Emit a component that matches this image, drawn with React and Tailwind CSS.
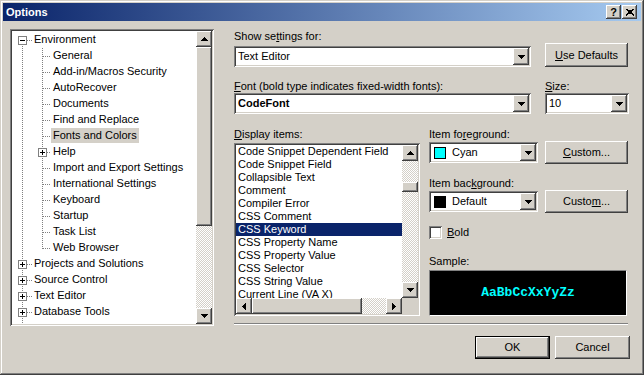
import React from 'react';

const font = "font-['Liberation_Sans',Arial,sans-serif]";
const frame = 'shadow-[inset_-1px_-1px_#404040,inset_1px_1px_#d4d0c8,inset_-2px_-2px_#808080,inset_2px_2px_#ffffff]';
const raised = 'shadow-[inset_-1px_-1px_#404040,inset_1px_1px_#ffffff,inset_-2px_-2px_#808080,inset_2px_2px_#d4d0c8]';
const sunken = 'shadow-[inset_1px_1px_#808080,inset_-1px_-1px_#ffffff,inset_2px_2px_#404040,inset_-2px_-2px_#d4d0c8]';
const checker = 'bg-[repeating-conic-gradient(#d4d0c8_0_25%,#ffffff_0_50%)] bg-[length:2px_2px]';
const dotH = 'bg-[repeating-linear-gradient(to_right,#808080_0_1px,transparent_1px_2px)]';
const dotV = 'bg-[repeating-linear-gradient(to_bottom,#808080_0_1px,transparent_1px_2px)]';

const Arrow = ({ dir }) => {
  const vertical = dir === 'up' || dir === 'down';
  const pts = {
    up: '0,4 3.5,0 7,4',
    down: '0,0 7,0 3.5,4',
    left: '4,0 4,7 0,3.5',
    right: '0,0 4,3.5 0,7',
  }[dir];
  return (
    <svg width={vertical ? 7 : 4} height={vertical ? 4 : 7} shapeRendering="crispEdges">
      <polygon points={pts} fill="#000" />
    </svg>
  );
};

const ScrollBtn = ({ dir }) => (
  <div className={`w-4 h-4 shrink-0 bg-[#d4d0c8] ${raised} flex items-center justify-center`}>
    <Arrow dir={dir} />
  </div>
);

const Combo = ({ w, children }) => (
  <div className={`${sunken} ${w} bg-white h-[21px] p-[2px] flex items-center`}>
    <div className="flex-1 min-w-0 flex items-center pl-[2px] leading-[17px]">{children}</div>
    <div className={`w-4 h-[17px] bg-[#d4d0c8] ${raised} flex items-center justify-center`}>
      <Arrow dir="down" />
    </div>
  </div>
);

const Btn = ({ w, h = 'h-[23px]', def, children }) => (
  <div
    className={`${w} ${h} bg-[#d4d0c8] flex items-center justify-center ${
      def ? 'border border-black' : ''
    } ${raised}`}
  >
    <span>{children}</span>
  </div>
);

const Expander = ({ open }) => (
  <div className="absolute top-[4px] w-[9px] h-[9px] border border-[#808080] bg-white flex items-center justify-center">
    <svg width="5" height="5" shapeRendering="crispEdges">
      <rect x="0" y="2" width="5" height="1" fill="#000" />
      {!open && <rect x="2" y="0" width="1" height="5" fill="#000" />}
    </svg>
  </div>
);

const tree = [
  { l: 0, t: 'Environment', exp: 'open', first: true },
  { l: 1, t: 'General' },
  { l: 1, t: 'Add-in/Macros Security' },
  { l: 1, t: 'AutoRecover' },
  { l: 1, t: 'Documents' },
  { l: 1, t: 'Find and Replace' },
  { l: 1, t: 'Fonts and Colors', sel: true },
  { l: 1, t: 'Help', exp: 'closed' },
  { l: 1, t: 'Import and Export Settings' },
  { l: 1, t: 'International Settings' },
  { l: 1, t: 'Keyboard' },
  { l: 1, t: 'Startup' },
  { l: 1, t: 'Task List' },
  { l: 1, t: 'Web Browser', last: true },
  { l: 0, t: 'Projects and Solutions', exp: 'closed' },
  { l: 0, t: 'Source Control', exp: 'closed' },
  { l: 0, t: 'Text Editor', exp: 'closed' },
  { l: 0, t: 'Database Tools', exp: 'closed' },
];

const TreeRow = ({ item }) => (
  <div className="relative h-4 flex items-start shrink-0">
    <span className={`absolute left-[10px] w-px bottom-0 ${item.first ? 'top-[8px]' : 'top-0'} ${dotV}`} />
    {item.l === 0 ? (
      <>
        <span className={`absolute left-[15px] top-[8px] w-[5px] h-px ${dotH}`} />
        <div className="absolute left-[6px] top-0">
          <Expander open={item.exp === 'open'} />
        </div>
      </>
    ) : (
      <>
        <span className={`absolute left-[30px] top-0 w-px ${item.last ? 'h-[9px]' : 'bottom-0'} ${dotV}`} />
        <span className={`absolute left-[31px] top-[8px] w-[8px] h-px ${dotH}`} />
        {item.exp && (
          <div className="absolute left-[26px] top-0">
            <Expander open={false} />
          </div>
        )}
      </>
    )}
    <span
      className={`${item.l === 0 ? 'ml-[20px]' : 'ml-[39px]'} px-[2px] h-[15px] leading-[15px] whitespace-nowrap ${
        item.sel ? 'bg-[#d4d0c8]' : ''
      }`}
    >
      {item.t}
    </span>
  </div>
);

const Tree = () => (
  <div className={`w-[204px] h-[297px] shrink-0 bg-white p-[2px] flex ${sunken}`}>
    <div className="flex-1 overflow-hidden pt-px flex flex-col">
      {tree.map((item) => (
        <TreeRow key={item.t} item={item} />
      ))}
      <div className="relative flex-1">
        <span className={`absolute left-[10px] w-px top-0 bottom-0 ${dotV}`} />
      </div>
    </div>
    <div className="w-4 flex flex-col">
      <ScrollBtn dir="up" />
      <div className={`h-[179px] bg-[#d4d0c8] ${raised}`} />
      <div className={`flex-1 ${checker}`} />
      <ScrollBtn dir="down" />
    </div>
  </div>
);

const items = [
  'Code Snippet Dependent Field',
  'Code Snippet Field',
  'Collapsible Text',
  'Comment',
  'Compiler Error',
  'CSS Comment',
  'CSS Keyword',
  'CSS Property Name',
  'CSS Property Value',
  'CSS Selector',
  'CSS String Value',
  'Current Line (VA X)',
];

const ListBox = () => (
  <div className={`w-[186px] h-[173px] bg-white p-[2px] flex flex-col ${sunken}`}>
    <div className="flex flex-1 min-h-0">
      <div className="flex-1 overflow-hidden flex flex-col">
        {items.map((t) => (
          <div
            key={t}
            className={`h-[13px] leading-[13px] pl-[2px] whitespace-nowrap shrink-0 ${
              t === 'CSS Keyword' ? 'bg-[#0a246a] text-white' : ''
            }`}
          >
            {t}
          </div>
        ))}
      </div>
      <div className="w-4 flex flex-col">
        <ScrollBtn dir="up" />
        <div className={`h-[21px] ${checker}`} />
        <div className={`h-[10px] bg-[#d4d0c8] ${raised}`} />
        <div className={`flex-1 ${checker}`} />
        <ScrollBtn dir="down" />
      </div>
    </div>
    <div className="h-4 flex">
      <ScrollBtn dir="left" />
      <div className={`w-[110px] bg-[#d4d0c8] ${raised}`} />
      <div className={`flex-1 ${checker}`} />
      <ScrollBtn dir="right" />
      <div className="w-4 bg-[#d4d0c8]" />
    </div>
  </div>
);

const Label = ({ children, className = '' }) => (
  <div className={`h-[13px] leading-[13px] whitespace-nowrap ${className}`}>{children}</div>
);

export default function App() {
  return (
    <div className={`w-[644px] h-[375px] bg-[#d4d0c8] p-[3px] flex flex-col text-[11px] text-black ${font} ${frame}`}>
      <div className="h-[18px] bg-[linear-gradient(to_right,#0a246a,#a6caf0)] flex items-center justify-between pl-[3px] pr-[4px]">
        <span className="text-white font-bold text-[11px]">Options</span>
        <div className="flex gap-[1px]">
          <div className={`w-[15px] h-[14px] bg-[#d4d0c8] ${raised} flex items-center justify-center font-bold text-[11px] leading-none`}>
            ?
          </div>
          <div className={`w-[15px] h-[14px] bg-[#d4d0c8] ${raised} flex items-center justify-center`}>
            <svg width="8" height="7" shapeRendering="crispEdges">
              <path d="M0 0 L8 7 M1 0 L8 6 M8 0 L0 7 M7 0 L0 6" stroke="#000" strokeWidth="1" />
            </svg>
          </div>
        </div>
      </div>

      <div className="flex pl-[7px] pt-[8px]">
        <Tree />
        <div className="ml-[20px] w-[394px] flex flex-col">
          <div className="flex items-start pt-px">
            <div className="w-[297px] flex flex-col">
              <Label>
                Show se<u>t</u>tings for:
              </Label>
              <div className="mt-[3px]">
                <Combo w="w-[297px]">Text Editor</Combo>
              </div>
            </div>
            <div className="ml-[14px] mt-[13px]">
              <Btn w="w-[83px]" h="h-[24px]">
                <u>U</u>se Defaults
              </Btn>
            </div>
          </div>

          <div className="flex items-start mt-[13px]">
            <div className="w-[297px] flex flex-col">
              <Label>
                <u>F</u>ont (bold type indicates fixed-width fonts):
              </Label>
              <Combo w="w-[297px]">
                <span className="font-bold">CodeFont</span>
              </Combo>
            </div>
            <div className="ml-[14px] flex flex-col">
              <Label>
                <u>S</u>ize:
              </Label>
              <Combo w="w-[84px]">10</Combo>
            </div>
          </div>

          <div className="flex items-start mt-[14px]">
            <div className="flex flex-col">
              <Label className="mb-[2px]">
                <u>D</u>isplay items:
              </Label>
              <ListBox />
            </div>
            <div className="ml-[9px] flex flex-col">
              <Label>
                Item fo<u>r</u>eground:
              </Label>
              <div className="flex items-center">
                <Combo w="w-[109px]">
                  <span className="w-3 h-3 border border-black bg-[#00ffff] mr-[6px] ml-px" />
                  Cyan
                </Combo>
                <div className="ml-[7px]">
                  <Btn w="w-[83px]">
                    <u>C</u>ustom...
                  </Btn>
                </div>
              </div>
              <Label className="mt-[13px]">
                Item bac<u>k</u>ground:
              </Label>
              <div className="flex items-center">
                <Combo w="w-[109px]">
                  <span className="w-3 h-3 border border-black bg-black mr-[6px] ml-px" />
                  Default
                </Combo>
                <div className="ml-[7px]">
                  <Btn w="w-[83px]">
                    Custo<u>m</u>...
                  </Btn>
                </div>
              </div>
              <div className="flex items-center mt-[13px] h-[13px]">
                <div className={`w-[13px] h-[13px] bg-white ${sunken}`} />
                <span className="ml-[5px]">
                  <u>B</u>old
                </span>
              </div>
              <Label className="mt-[16px]">Sample:</Label>
              <div className="mt-[2px] w-[198px] h-[46px] bg-black border border-[#808080] border-b-white border-r-white flex items-center justify-center">
                <span className="font-['Liberation_Mono',monospace] font-bold text-[13px] text-[#00ffff]">
                  AaBbCcXxYyZz
                </span>
              </div>
            </div>
          </div>

          <div className="mt-[7px] h-[2px] border-t border-[#808080] border-b border-b-white" />
        </div>
      </div>

      <div className="flex justify-end gap-[5px] pr-[11px] mt-[10px]">
        <Btn w="w-[75px]" def>
          OK
        </Btn>
        <Btn w="w-[75px]">Cancel</Btn>
      </div>
    </div>
  );
}
